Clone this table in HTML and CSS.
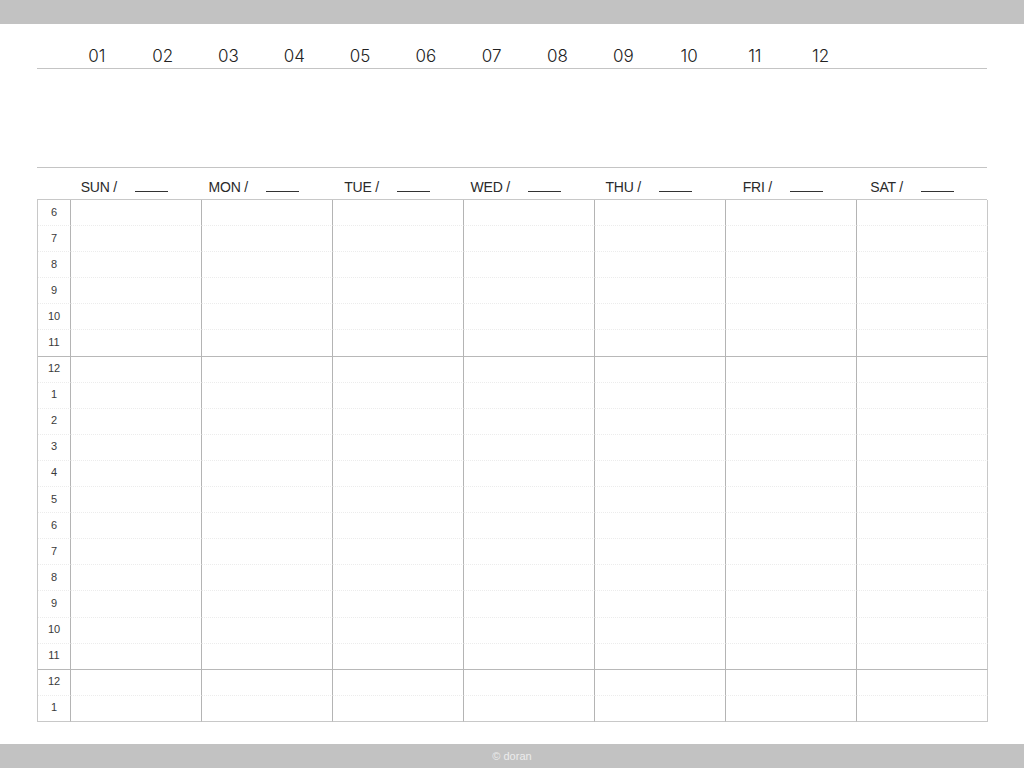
FILE: index.html
```html
<!DOCTYPE html>

<html>
    <head>
        <meta charset="UTF-8">
        <title>weekly</title>

        <link rel="stylesheet" href="styles.css">
    </head>

    <body>
        <div class="page">
            <div class="top-bar"></div>

            <div class="content">
                <div class="months">
                    <span>01</span><span>02</span><span>03</span><span>04</span>
                    <span>05</span><span>06</span><span>07</span><span>08</span>
                    <span>09</span><span>10</span><span>11</span><span>12</span>
                </div>

                <div class="memo"></div>

                <div class="days">
                    <div class="corner"></div>
                    <div class="day">SUN /<span class="blank"></span></div>
                    <div class="day">MON /<span class="blank"></span></div>
                    <div class="day">TUE /<span class="blank"></span></div>
                    <div class="day">WED /<span class="blank"></span></div>
                    <div class="day">THU /<span class="blank"></span></div>
                    <div class="day">FRI /<span class="blank"></span></div>
                    <div class="day">SAT /<span class="blank"></span></div>
                </div>

                <div class="grid" id="grid"></div>
            </div>

            <div class="footer">© doran</div>
        </div>

        <script>
            const hours = [6, 7, 8, 9, 10, 11, 12, 1, 2, 3, 4, 5, 6, 7, 8, 9, 10, 11, 12, 1];

            window.addEventListener('DOMContentLoaded', () => {
                const grid = document.querySelector('#grid');

                hours.forEach((hour, index) => {
                    // 11시 다음 줄은 진한 선
                    const strong = (hour === 11);
                    const last = (index === hours.length - 1);

                    const label = document.createElement('div');
                    label.className = 'cell hour';
                    label.textContent = hour;
                    if (strong) label.classList.add('strong');
                    if (last) label.classList.add('last');
                    grid.appendChild(label);

                    for (let i = 0; i < 7; i++) {
                        const cell = document.createElement('div');
                        cell.className = 'cell';
                        if (strong) cell.classList.add('strong');
                        if (last) cell.classList.add('last');
                        if (i === 6) cell.classList.add('end');
                        grid.appendChild(cell);
                    }
                });
            });
        </script>
    </body>
</html>
```

FILE: styles.css
```css
* {
    margin: 0;
    padding: 0;
    box-sizing: border-box;
}

html, body {
    width: 100%;
    height: 100%;
    background-color: #ffffff;
    font-family: "Liberation Sans", Arial, sans-serif;
    color: #333333;
}

.page {
    height: 100vh;
    display: flex;
    flex-direction: column;
}

.top-bar {
    height: 24px;
    background-color: #c2c2c2;
}

.content {
    flex: 1;
    padding: 0 37px;
}

.months {
    display: flex;
    padding: 22px 0 2px 27px;
    border-bottom: 1px solid #c4c4c4;
    font-family: "Inter", sans-serif;
    font-weight: 300;
    font-size: 17px;
    line-height: 20px;
    color: #222222;
}

.months span {
    width: 65.8px;
    text-align: center;
}

.memo {
    height: 99px;
    border-bottom: 1px solid #c4c4c4;
}

.days {
    display: grid;
    grid-template-columns: 33px repeat(7, 131px);
    padding: 11px 0 4px 0;
    font-size: 14px;
    line-height: 16px;
    letter-spacing: -0.2px;
    color: #2a2a2a;
}

.day {
    display: flex;
    justify-content: flex-end;
    align-items: baseline;
    gap: 18px;
    padding-right: 33px;
}

.blank {
    display: inline-block;
    width: 33px;
    height: 1px;
    border-bottom: 1px solid #333333;
}

.grid {
    display: grid;
    grid-template-columns: 33px repeat(7, 131px);
    grid-template-rows: repeat(20, 26.1px);
    border-top: 1px solid #c8c8c8;
    border-left: 1px solid #c8c8c8;
}

.cell {
    border-right: 1px solid #b4b4b4;
    border-bottom: 1px dotted #ececec;
}

.cell.end {
    border-right: 1px solid #c8c8c8;
}

.cell.strong {
    border-bottom: 1px solid #b8b8b8;
}

.cell.last {
    border-bottom: 1px solid #c8c8c8;
}

.hour {
    display: flex;
    align-items: center;
    justify-content: center;
    padding-bottom: 2px;
    font-size: 11px;
    color: #3a3a3a;
}

.footer {
    height: 24px;
    background-color: #c2c2c2;
    color: #ececec;
    font-size: 11px;
    line-height: 24px;
    text-align: center;
}
```
